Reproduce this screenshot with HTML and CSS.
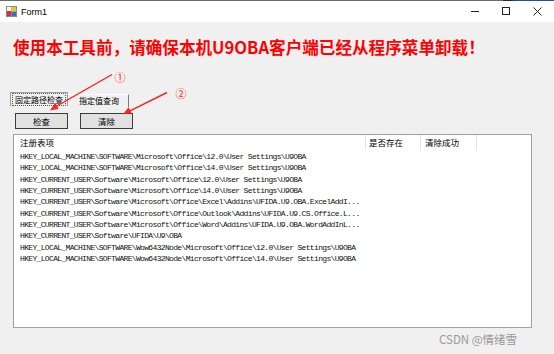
FILE: index.html
```html
<!DOCTYPE html>
<html lang="zh-CN">
<head>
<meta charset="utf-8">
<title>Form1</title>
<link rel="stylesheet" href="styles.css">
</head>
<body>
<div class="window">
  <div class="topline"></div>
  <div class="titlebar">
    <svg class="app-icon" width="11" height="11" viewBox="0 0 11 11">
      <rect x="0.5" y="0.5" width="10" height="10" fill="#fff" stroke="#8a8a8a"/>
      <rect x="5" y="1" width="5" height="4.5" fill="#f5c518"/>
      <rect x="1" y="5" width="4.5" height="5" fill="#d9302a"/>
      <rect x="5.5" y="5.5" width="4.5" height="4.5" fill="#2f6fd6"/>
    </svg>
    <span class="title">Form1</span>
    <div class="controls">
      <svg class="ctl" width="31" height="22" viewBox="0 0 31 22"><line x1="11" y1="11.5" x2="19" y2="11.5" stroke="#222" stroke-width="1"/></svg>
      <svg class="ctl" width="31" height="22" viewBox="0 0 31 22"><rect x="11.5" y="7.5" width="7" height="7" fill="none" stroke="#222" stroke-width="1"/></svg>
      <svg class="ctl" width="31" height="22" viewBox="0 0 31 22"><path d="M11.5 7.5 L19.5 15.5 M19.5 7.5 L11.5 15.5" stroke="#222" stroke-width="1"/></svg>
    </div>
  </div>

  <div class="client">
    <h1 class="warning">使用本工具前，请确保本机U9OBA客户端已经从程序菜单卸载！</h1>

    <div class="tabs">
      <div class="tab tab-active"><span class="focus">固定路径检查</span></div>
      <div class="tab">指定值查询</div>
    </div>

    <div class="buttons">
      <button class="btn btn-check">检查</button>
      <button class="btn btn-clear">清除</button>
    </div>

    <div class="listview">
      <div class="lv-header">
        <div class="hcell c1">注册表项</div>
        <div class="hcell c2">是否存在</div>
        <div class="hcell c3">清除成功</div>
        <div class="hcell c4"></div>
      </div>
      <div class="lv-body">
        <div class="row">HKEY_LOCAL_MACHINE\SOFTWARE\Microsoft\Office\12.0\User Settings\U9OBA</div>
        <div class="row">HKEY_LOCAL_MACHINE\SOFTWARE\Microsoft\Office\14.0\User Settings\U9OBA</div>
        <div class="row">HKEY_CURRENT_USER\Software\Microsoft\Office\12.0\User Settings\U9OBA</div>
        <div class="row">HKEY_CURRENT_USER\Software\Microsoft\Office\14.0\User Settings\U9OBA</div>
        <div class="row">HKEY_CURRENT_USER\Software\Microsoft\Office\Excel\Addins\UFIDA.U9.OBA.ExcelAddI...</div>
        <div class="row">HKEY_CURRENT_USER\Software\Microsoft\Office\Outlook\Addins\UFIDA.U9.CS.Office.L...</div>
        <div class="row">HKEY_CURRENT_USER\Software\Microsoft\Office\Word\Addins\UFIDA.U9.OBA.WordAddInL...</div>
        <div class="row">HKEY_CURRENT_USER\Software\UFIDA\U9\OBA</div>
        <div class="row">HKEY_LOCAL_MACHINE\SOFTWARE\Wow6432Node\Microsoft\Office\12.0\User Settings\U9OBA</div>
        <div class="row">HKEY_LOCAL_MACHINE\SOFTWARE\Wow6432Node\Microsoft\Office\14.0\User Settings\U9OBA</div>
      </div>
    </div>
  </div>

  <svg class="annotations" width="554" height="354" viewBox="0 0 554 354">
    <line x1="112" y1="74.5" x2="56" y2="106.5" stroke="#ff2020" stroke-width="1.4"/>
    <polygon points="50,110.5 58.6,108.8 55.2,102.8" fill="#ff2020"/>
    <text x="120" y="82" class="num">①</text>
    <line x1="167" y1="92.5" x2="129" y2="111.3" stroke="#ff2020" stroke-width="1.4"/>
    <polygon points="123,114.3 131.6,113.2 128.6,107.3" fill="#ff2020"/>
    <text x="181" y="97.5" class="num">②</text>
  </svg>

  <div class="watermark">CSDN @情绪雪</div>
</div>
</body>
</html>
```

FILE: styles.css
```css
html, body {
  margin: 0;
  padding: 0;
}

body {
  width: 554px;
  height: 354px;
  overflow: hidden;
  background: #f0f0f0;
  font-family: "Noto Sans CJK SC", "Noto Sans", sans-serif;
}

.window {
  position: relative;
  width: 554px;
  height: 354px;
  background: #f0f0f0;
  overflow: hidden;
}

.topline {
  height: 1px;
  background: linear-gradient(to right, #6b6b6b 0, #6b6b6b 503px, #2a2a2a 503px, #2a2a2a 513px, #1f4f9e 513px);
}

.titlebar {
  height: 21px;
  background: #ffffff;
  display: flex;
  align-items: center;
}

.app-icon {
  margin-left: 6px;
  flex: none;
}

.title {
  margin-left: 4px;
  font-family: "Liberation Sans", Arial, sans-serif;
  font-size: 9px;
  color: #000;
  margin-top: 1px;
}

.controls {
  margin-left: auto;
  display: flex;
  align-items: center;
  margin-right: 1px;
  margin-top: -1px;
}

.ctl {
  display: block;
}

.client {
  display: flex;
  flex-direction: column;
  align-items: flex-start;
}

.warning {
  margin: 14px 0 0 13px;
  font-family: "Noto Sans CJK SC", sans-serif;
  font-size: 16.6px;
  line-height: 22px;
  font-weight: 700;
  color: #ff0000;
  letter-spacing: 0;
  white-space: nowrap;
}

.tabs {
  margin: 34px 0 0 10px;
  display: flex;
  align-items: flex-start;
  height: 15px;
}

.tab {
  font-family: "Noto Sans CJK SC", sans-serif;
  font-size: 8px;
  line-height: 12px;
  color: #000;
  box-sizing: border-box;
  white-space: nowrap;
}

.tab-active {
  width: 58px;
  height: 14px;
  border: 1px solid #a0a0a0;
  border-bottom: none;
  background: #f0f0f0;
  padding: 1px 0 0 2px;
}

.focus {
  display: inline-block;
  outline: 1px dotted #555;
  outline-offset: 0;
  line-height: 11px;
  padding: 0 2px 0 2px;
}

.tab:not(.tab-active) {
  margin-top: 2px;
  width: 61px;
  height: 13px;
  border-top: 1px solid #ffffff;
  border-right: 1px solid #7a7a7a;
  padding: 0 0 0 11px;
}

.buttons {
  margin-top: 6px;
  display: flex;
}

.btn {
  box-sizing: border-box;
  width: 53px;
  height: 16px;
  padding: 0;
  border: 1px solid #3c3c3c;
  background: #e1e1e1;
  font-family: "Noto Sans CJK SC", sans-serif;
  font-size: 8.5px;
  line-height: 14px;
  color: #000;
}

.btn-check {
  margin-left: 15px;
}

.btn-clear {
  margin-left: 12px;
}

.listview {
  margin: 5px 0 0 13px;
  box-sizing: border-box;
  width: 519px;
  height: 194px;
  border: 1px solid #a0a0a0;
  background: #ffffff;
}

.lv-header {
  display: grid;
  grid-template-columns: 352px 55px 56px 1fr;
  height: 15px;
}

.hcell {
  font-family: "Noto Sans CJK SC", sans-serif;
  font-size: 8.5px;
  line-height: 15px;
  color: #000;
  box-sizing: border-box;
  border-right: 1px solid #e5e5e5;
  white-space: nowrap;
}

.hcell.c1 { padding-left: 6px; }
.hcell.c2 { padding-left: 3px; }
.hcell.c3 { padding-left: 4px; }
.hcell.c4 { border-right: none; }

.lv-body {
  padding-top: 1px;
}

.row {
  width: 350px;
  padding-left: 6px;
  box-sizing: border-box;
  font-family: "Liberation Mono", "Courier New", monospace;
  font-size: 8px;
  letter-spacing: -0.66px;
  line-height: 11.33px;
  height: 11.33px;
  color: #111;
  white-space: nowrap;
  overflow: hidden;
}

.annotations {
  position: absolute;
  left: 0;
  top: 0;
  pointer-events: none;
}

.num {
  font-family: "Noto Sans CJK SC", sans-serif;
  font-size: 11px;
  fill: #ff2020;
  text-anchor: middle;
}

.watermark {
  position: absolute;
  left: 439px;
  top: 331px;
  font-family: "Noto Sans CJK SC", "Noto Sans", sans-serif;
  font-size: 11.5px;
  line-height: 16px;
  color: #9a9a9a;
  white-space: nowrap;
}
```
